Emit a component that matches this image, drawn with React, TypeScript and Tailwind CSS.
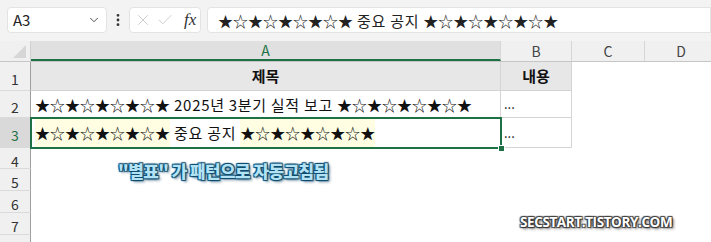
import React from 'react';
import { ChevronDown, EllipsisVertical, X, Check } from 'lucide-react';

const FONT = { fontFamily: '"Noto Sans CJK KR", "Noto Sans", sans-serif' };

const cols = [
  { name: 'A', w: 'w-[470px]', selected: true },
  { name: 'B', w: 'w-[71px]', selected: false },
  { name: 'C', w: 'w-[73px]', selected: false },
  { name: 'D', w: 'w-[73px]', selected: false },
];

const Stars: React.FC<{ hl?: boolean }> = ({ hl }) => (
  <span className={`text-[15px] ${hl ? 'bg-[#fffee3] flex items-center' : ''}`}>★☆★☆★☆★☆★</span>
);

const Words: React.FC<{ children: React.ReactNode; block?: boolean }> = ({ children, block }) => (
  <span className={`text-[15px] tracking-[0.7px] whitespace-pre ${block ? 'flex items-center' : ''}`}>{children}</span>
);

const RowHead: React.FC<{ n?: number; h: string; selected?: boolean }> = ({ n, h, selected }) => (
  <div
    className={`w-[31px] ${h} shrink-0 flex items-center justify-center text-[14px] border-b border-[#dadada] border-r border-r-[#9e9e9e] ${
      selected ? 'bg-[#d9d9d9] text-[#1e7145]' : 'bg-[#f0f0f0] text-[#333]'
    }`}
  >
    <span className="mt-[6px]">{n}</span>
  </div>
);

export default function App() {
  return (
    <div className="w-[711px] h-[242px] overflow-hidden bg-white relative" style={FONT}>
      {/* formula bar */}
      <div className="h-[41px] bg-[#f3f3f3] flex items-start pt-[7px] pl-[7px]">
        <div className="w-[100px] h-[26px] bg-white rounded-[4px] border border-[#e3e3e3] flex items-center pl-[5px] pr-[5px] text-[15px] text-[#222]">
          <span className="flex-1">A3</span>
          <ChevronDown size={14} strokeWidth={1.6} className="text-[#444]" />
        </div>
        <div className="w-[22px] h-[26px] flex items-center justify-center">
          <EllipsisVertical size={16} strokeWidth={2.2} className="text-[#333]" />
        </div>
        <div className="w-[72px] h-[26px] bg-white rounded-[4px] border border-[#e3e3e3] flex items-center pl-[4px] gap-[4px]">
          <X size={18} strokeWidth={1} className="text-[#bdbdbd]" />
          <Check size={18} strokeWidth={1} className="text-[#bdbdbd]" />
          <span
            className="ml-[6px] text-[17px] italic text-[#333]"
            style={{ fontFamily: '"Liberation Serif", "DejaVu Serif", serif' }}
          >
            fx
          </span>
        </div>
        <div className="ml-[6px] flex-1 h-[26px] bg-white rounded-l-[4px] border border-[#e3e3e3] flex items-center pl-[10px] text-[#222] whitespace-nowrap">
          <span>
            <Stars />
            <Words> 중요 공지 </Words>
            <Stars />
          </span>
        </div>
      </div>

      {/* column headers */}
      <div className="flex h-[21px] bg-[#f0f0f0] border-b border-[#c6c6c6]">
        <div className="w-[31px] shrink-0 relative border-r border-[#d0d0d0]">
          <div className="absolute right-[4px] bottom-[3px] w-0 h-0 border-l-[13px] border-l-transparent border-b-[13px] border-b-[#d6d6d6]" />
        </div>
        {cols.map((c) => (
          <div
            key={c.name}
            className={`${c.w} shrink-0 flex items-center justify-center text-[14px] border-r border-[#d6d6d6] ${
              c.selected ? 'bg-[#e0e0e0] text-[#1e7145] border-b-2 border-b-[#1e7145]' : 'text-[#444]'
            }`}
          >
            {c.name}
          </div>
        ))}
        <div className="flex-1" />
      </div>

      {/* row 1 */}
      <div className="flex">
        <RowHead n={1} h="h-[29px]" />
        <div className="w-[470px] h-[29px] bg-[#e7e7e7] border-r border-b border-[#d4d4d4] flex items-center justify-center text-[15px] font-bold text-[#111]">
          제목
        </div>
        <div className="w-[71px] h-[29px] bg-[#e7e7e7] border-r border-b border-[#d4d4d4] flex items-center justify-center text-[15px] font-bold text-[#111]">
          내용
        </div>
      </div>

      {/* row 2 */}
      <div className="flex">
        <RowHead n={2} h="h-[27px]" />
        <div className="w-[470px] h-[27px] border-r border-b border-[#d4d4d4] flex items-center pl-[4px] text-[#111] whitespace-nowrap overflow-hidden">
          <span>
            <Stars />
            <Words> 2025년 3분기 실적 보고 </Words>
            <Stars />
          </span>
        </div>
        <div className="w-[71px] h-[27px] border-r border-b border-[#d4d4d4] flex items-center pl-[3px] text-[13px] text-[#111]">
          ...
        </div>
      </div>

      {/* row 3 */}
      <div className="flex">
        <RowHead n={3} h="h-[30px]" selected />
        <div className="w-[470px] h-[30px] relative flex items-stretch py-[1px] pl-[4px] text-[#111] whitespace-nowrap">
          <Stars hl />
          <Words block> 중요 공지 </Words>
          <Stars hl />
          <div className="absolute -left-[1px] -top-[1px] -right-[1px] -bottom-[1px] border-2 border-[#1e7145] pointer-events-none" />
          <div className="absolute -right-[4px] -bottom-[4px] w-[7px] h-[7px] bg-[#1e7145] border border-white" />
        </div>
        <div className="w-[71px] h-[30px] border-r border-b border-[#d4d4d4] flex items-center pl-[3px] text-[13px] text-[#111]">
          ...
        </div>
      </div>

      {/* rows 4-8 */}
      {[4, 5, 6, 7].map((n) => (
        <div key={n} className="flex">
          <RowHead n={n} h={n === 4 ? 'h-[21px]' : 'h-[22px]'} />
        </div>
      ))}
      <div className="flex">
        <RowHead h="h-[22px]" />
      </div>

      {/* annotation overlay */}
      <div
        className="absolute left-[118px] top-[158px] text-[17px] font-black text-[#b3e2f5] tracking-[-0.6px] [text-shadow:0_0_1px_#0f4c6e,1px_1px_1px_#0f4c6e,-1px_-1px_1px_#0f4c6e,1px_-1px_1px_#0f4c6e,-1px_1px_1px_#0f4c6e,2px_2px_3px_#6a8aa0]"
      >
        "별표" 가 패턴으로 자동고침됨
      </div>
      <div
        className="absolute left-[520px] top-[212px] text-[13.5px] font-bold text-white tracking-[-0.4px] [text-shadow:0_0_1px_#333,1px_1px_1px_#333,-1px_-1px_1px_#444,1px_-1px_1px_#444,-1px_1px_1px_#444,2px_2px_3px_#777]"
        style={{ fontFamily: '"Open Sans", "Noto Sans", sans-serif' }}
      >
        SECSTART.TISTORY.COM
      </div>
    </div>
  );
}
